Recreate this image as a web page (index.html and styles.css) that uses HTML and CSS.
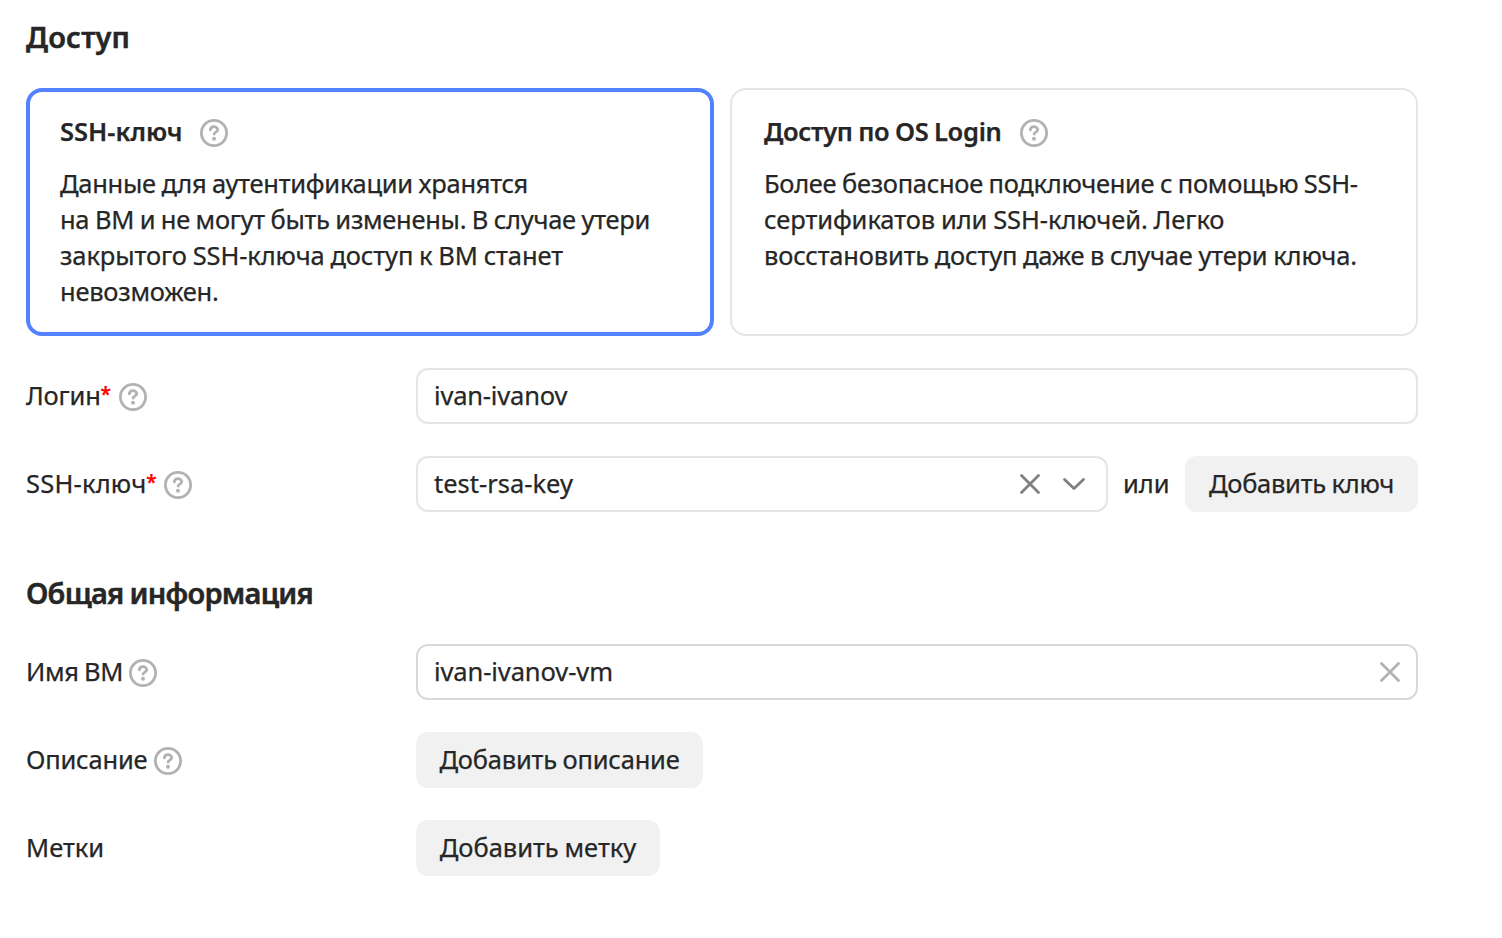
FILE: index.html
```
<!DOCTYPE html>
<html lang="ru">
<head>
<meta charset="utf-8">
<title>Доступ</title>
<link rel="stylesheet" href="styles.css">
</head>
<body>
<svg class="defs" aria-hidden="true">
  <symbol id="help" viewBox="0 0 28 28">
    <circle cx="14" cy="14" r="12.6" fill="none" stroke="currentColor" stroke-width="2.8"/>
    <path d="M10.300 10.800c.3-2 1.800-3.100 3.700-3.100s3.700 1.200 3.700 3c0 2.400-3.400 2.400-3.600 4.300" fill="none" stroke="currentColor" stroke-width="2.800" stroke-linecap="round" stroke-linejoin="round"/>
    <circle cx="14" cy="19.800" r="2" fill="currentColor"/>
  </symbol>
  <symbol id="cross" viewBox="0 0 22 22">
    <path d="M2.500 2.500l17 17M19.500 2.500l-17 17" fill="none" stroke="currentColor" stroke-width="2.800" stroke-linecap="round"/>
  </symbol>
</svg>
<main class="form">
  <h2 class="title"><span class="w-access">Доступ</span></h2>
  <div class="cards">
    <section class="card card-selected">
      <h3 class="card-title"><span class="w-ssh-b">SSH-ключ</span><svg class="help"><use href="#help"/></svg></h3>
      <p class="card-text">
        <span class="line w-a1">Данные для аутентификации хранятся</span>
        <span class="line w-a2">на ВМ и не могут быть изменены. В случае утери</span>
        <span class="line w-a3">закрытого SSH-ключа доступ к ВМ станет</span>
        <span class="line w-a4">невозможен.</span>
      </p>
    </section>
    <section class="card">
      <h3 class="card-title"><span class="w-os">Доступ по OS Login</span><svg class="help"><use href="#help"/></svg></h3>
      <p class="card-text">
        <span class="line w-b1">Более безопасное подключение с помощью SSH-</span>
        <span class="line w-b2">сертификатов или SSH-ключей. Легко</span>
        <span class="line w-b3">восстановить доступ даже в случае утери ключа.</span>
      </p>
    </section>
  </div>
  <div class="row">
    <div class="label"><span class="w-login">Логин</span><span class="req">*</span><svg class="help"><use href="#help"/></svg></div>
    <div class="input"><span class="value w-ivan">ivan-ivanov</span></div>
  </div>
  <div class="row">
    <div class="label"><span class="w-ssh">SSH-ключ</span><span class="req">*</span><svg class="help"><use href="#help"/></svg></div>
    <div class="input"><span class="value w-key">test-rsa-key</span><svg class="cross"><use href="#cross"/></svg><svg class="chevron" viewBox="0 0 24 14"><path d="M2.500 2.500l9.500 9 9.500-9" fill="none" stroke="currentColor" stroke-width="2.800" stroke-linecap="round" stroke-linejoin="round"/></svg></div>
    <span class="or">или</span>
    <div class="button b-key"><span class="w-add-key">Добавить ключ</span></div>
  </div>
  <h2 class="title title-info"><span class="w-info">Общая информация</span></h2>
  <div class="row">
    <div class="label"><span class="w-name">Имя ВМ</span><svg class="help"><use href="#help"/></svg></div>
    <div class="input input-hover"><span class="value w-vm">ivan-ivanov-vm</span><svg class="cross cross-light"><use href="#cross"/></svg></div>
  </div>
  <div class="row">
    <div class="label"><span class="w-desc">Описание</span><svg class="help"><use href="#help"/></svg></div>
    <div class="button b-desc"><span class="w-add-desc">Добавить описание</span></div>
  </div>
  <div class="row">
    <div class="label"><span class="w-tags">Метки</span></div>
    <div class="button b-tag"><span class="w-add-tag">Добавить метку</span></div>
  </div>
</main>
</body>
</html>
```
FILE: styles.css
```
* { box-sizing: border-box; }
body {
  margin: 0;
  background: #fff;
  color: #262626;
  font: 400 25.5px/36px "Noto Sans", sans-serif;
  white-space: nowrap;
  word-spacing: -.7px;
  -webkit-text-stroke: .25px currentColor;
}
.defs { position: absolute; width: 0; height: 0; }
.form { width: 1418px; padding: 17px 0 0 26px; }
.title { margin: 0 0 31px; font-size: 29px; line-height: 40px; font-weight: 600; -webkit-text-stroke-width: .5px; }
.title-info { margin: 61px 0 31px; }
.cards { display: grid; grid-template-columns: 1fr 1fr; gap: 16px; height: 248px; margin-bottom: 32px; }
.card { padding: 23px 32px; border: 2px solid #e5e5e5; border-radius: 16px; }
.card-selected { padding: 21px 30px; border: 4px solid #5282ff; }
.card-title { display: flex; align-items: center; height: 36px; margin: 0 0 16px; font-size: 25.5px; line-height: 36px; font-weight: 600; }
.card-title span { width: 140px; }
.card-title .w-os { width: 256px; }
.card-title .help { margin-top: 4px; }
.card-text { margin: 0; }
.line { display: block; }
.help { flex: none; width: 28px; height: 28px; margin-top: 2px; color: #b2b2b2; }
.row { display: flex; align-items: center; height: 56px; margin-bottom: 32px; }
.label { display: flex; align-items: center; flex: none; width: 390px; }
.label > span:first-child { margin-right: 6px; padding-bottom: 2px; }
.label > .w-desc:first-child { margin-right: 7px; }
.label > span:first-child:has(+ .req) { margin-right: 0; }
.req { width: 18px; padding: 0 0 5px; color: #f00; font-size: 19px; font-weight: 600; }
.input { display: flex; align-items: center; flex: 1; height: 56px; padding: 0 16px; border: 2px solid #e5e5e5; border-radius: 12px; }
.input-hover { border-color: #d9d9d9; }
.value { flex: 1; padding-bottom: 2px; }
.cross { width: 22px; height: 22px; color: #808080; }
.cross-light { color: #b2b2b2; margin-right: -1px; }
.chevron { width: 24px; height: 14px; margin: 0 4px 0 21px; color: #808080; }
.or { width: 45px; margin: 0 17px 0 15px; padding-bottom: 2px; }
.button { display: flex; justify-content: center; align-items: center; flex: none; height: 56px; padding-bottom: 2px; border-radius: 12px; background: #f1f1f1; }
.b-key { width: 233px; }
.b-desc { width: 287px; }
.b-tag { width: 244px; }

/* Tracking per text */
.w-access { letter-spacing: .2px; }
.w-info { letter-spacing: -.76px; }
.w-ssh-b { letter-spacing: 0; }
.w-os { letter-spacing: -.32px; }
.w-a1 { letter-spacing: -.29px; }
.w-a2 { letter-spacing: -.29px; }
.w-a3 { letter-spacing: -.11px; }
.w-a4 { letter-spacing: -.25px; }
.w-b1 { letter-spacing: -.3px; }
.w-b2 { letter-spacing: -.08px; }
.w-b3 { letter-spacing: -.18px; }
.w-login { letter-spacing: -.2px; }
.w-ssh { letter-spacing: .2px; }
.w-ivan { letter-spacing: -.19px; }
.w-key { letter-spacing: 0; }
.w-add-key { letter-spacing: -.28px; }
.w-name { letter-spacing: -.35px; }
.w-desc { letter-spacing: -.2px; }
.w-vm { letter-spacing: -.1px; }
.w-add-desc { letter-spacing: -.22px; }
.w-add-tag { letter-spacing: -.03px; }
.w-tags { letter-spacing: 0; }
```
